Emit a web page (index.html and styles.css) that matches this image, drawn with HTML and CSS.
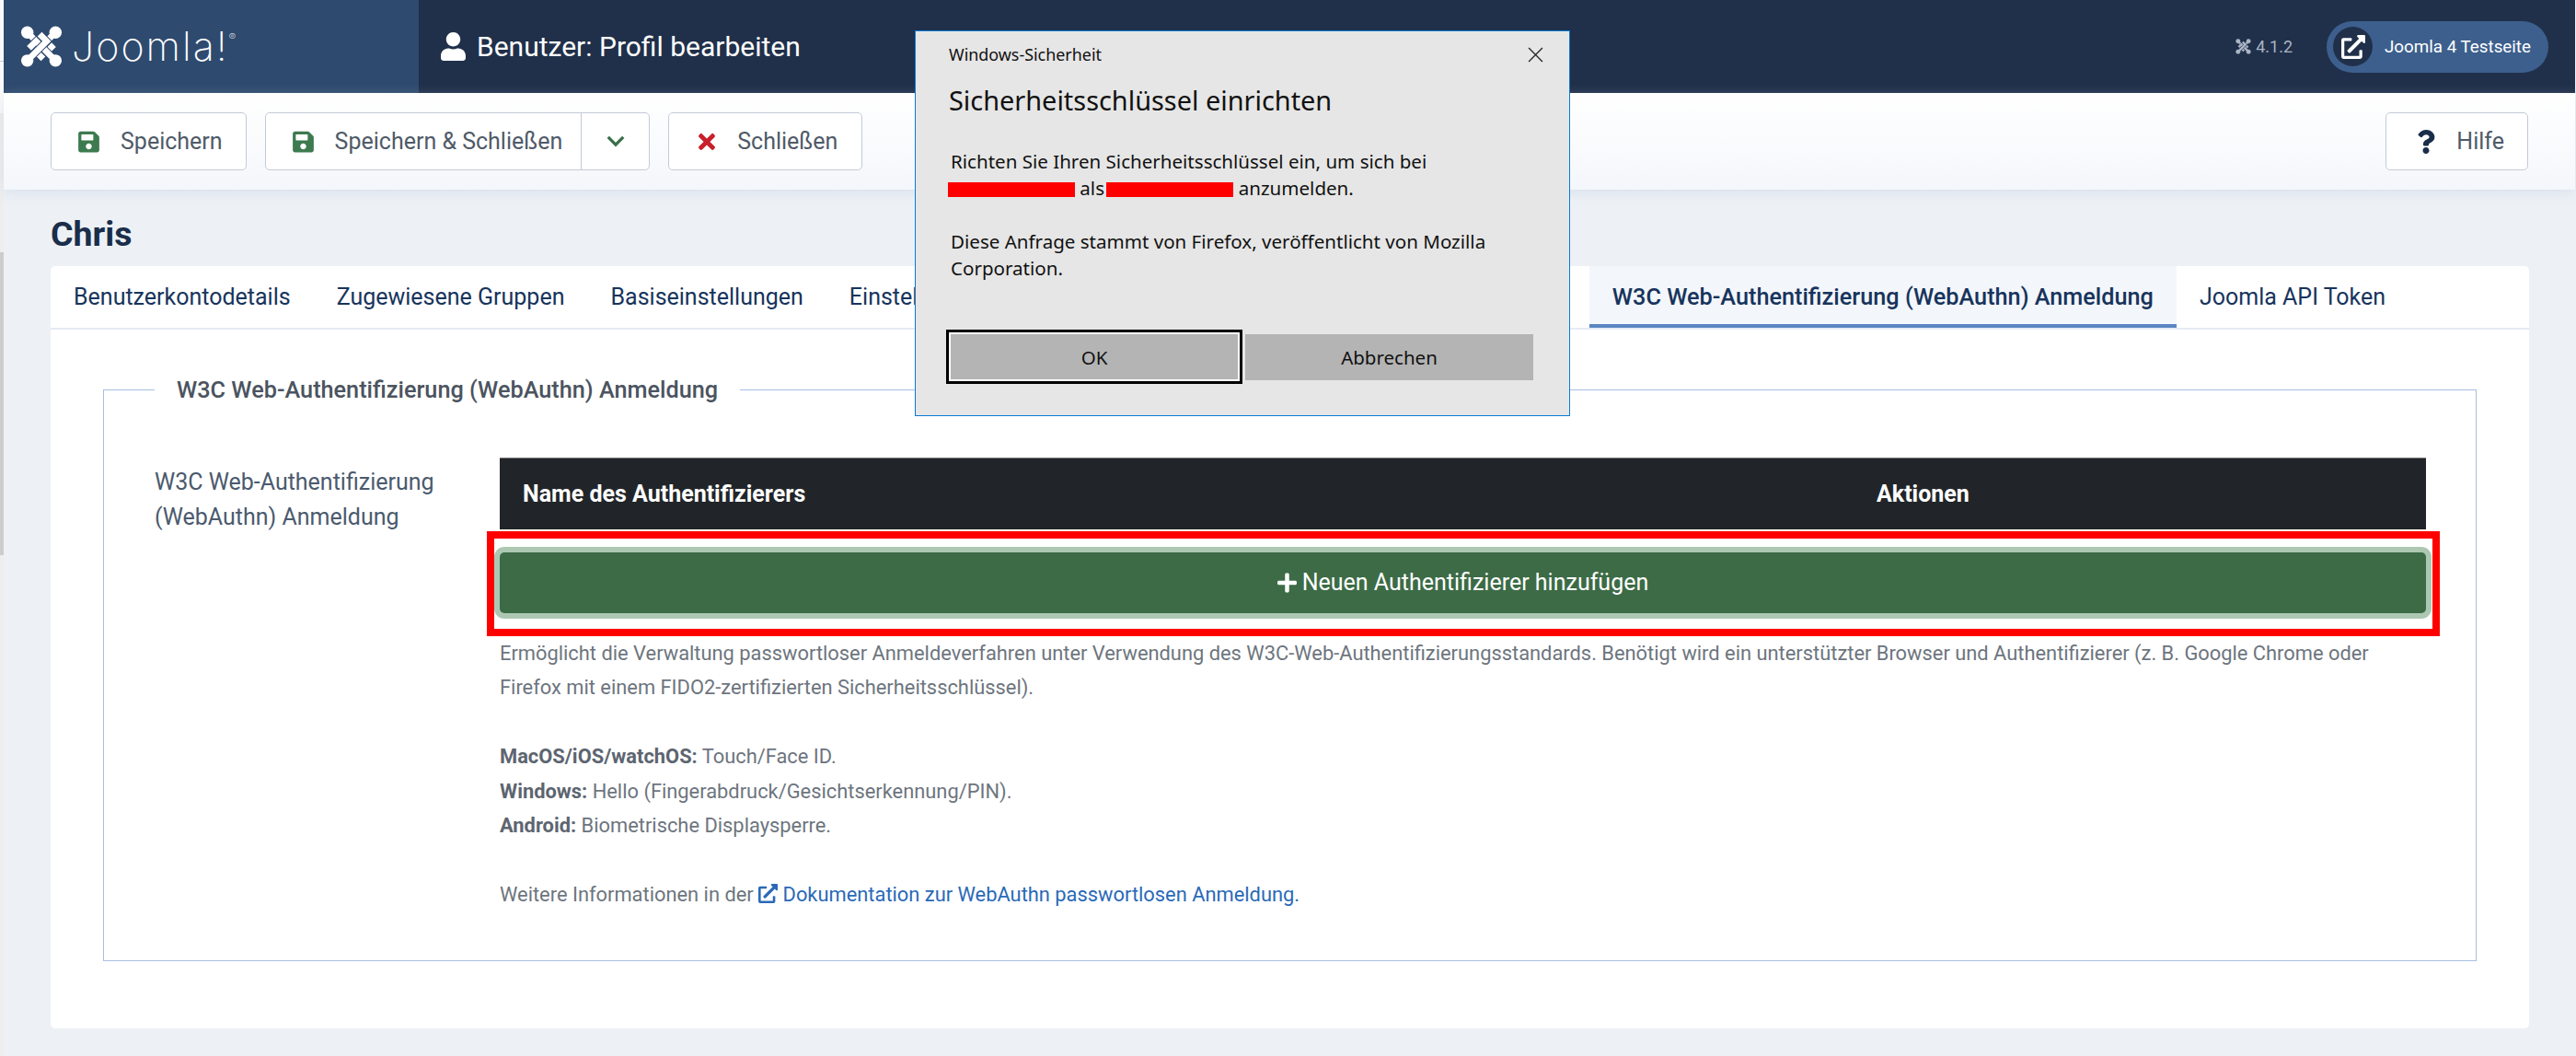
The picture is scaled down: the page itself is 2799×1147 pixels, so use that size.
FILE: index.html
```html
<!DOCTYPE html>
<html lang="de">
<head>
<meta charset="utf-8">
<title>Benutzer: Profil bearbeiten</title>
<link rel="stylesheet" href="styles.css">
</head>
<body>
<svg class="defs" width="0" height="0" aria-hidden="true">
  <defs>
    <g id="joomla-glyph">
      <g id="strand">
        <path class="strand-bg" d="M8 8 L30 30 L38 22"/>
        <path class="strand-fg" d="M8 8 L30 30 L38 22"/>
        <circle class="strand-end" cx="8" cy="8" r="7"/>
      </g>
      <use href="#strand" transform="rotate(90 24 24)"/>
      <use href="#strand" transform="rotate(180 24 24)"/>
      <use href="#strand" transform="rotate(270 24 24)"/>
    </g>
    <symbol id="i-save" viewBox="0 0 448 512"><path d="M433.941 129.941l-83.882-83.882A48 48 0 0 0 316.118 32H48C21.49 32 0 53.49 0 80v352c0 26.51 21.49 48 48 48h352c26.51 0 48-21.49 48-48V163.882a48 48 0 0 0-14.059-33.941zM224 416c-35.346 0-64-28.654-64-64 0-35.346 28.654-64 64-64s64 28.654 64 64c0 35.346-28.654 64-64 64zm96-304.52V212c0 6.627-5.373 12-12 12H76c-6.627 0-12-5.373-12-12V108c0-6.627 5.373-12 12-12h228.52c3.183 0 6.235 1.264 8.485 3.515l3.48 3.48A11.996 11.996 0 0 1 320 111.48z"/></symbol>
    <symbol id="i-ext" viewBox="0 0 512 512"><path d="M432,320H400a16,16,0,0,0-16,16V448H64V128H208a16,16,0,0,0,16-16V80a16,16,0,0,0-16-16H48A48,48,0,0,0,0,112V464a48,48,0,0,0,48,48H400a48,48,0,0,0,48-48V336A16,16,0,0,0,432,320ZM488,0h-128c-21.37,0-32.05,25.91-17,41l35.73,35.73L135,320.37a24,24,0,0,0,0,34L157.67,377a24,24,0,0,0,34,0L435.28,133.32,471,169c15,15,41,4.5,41-17V24A24,24,0,0,0,488,0Z"/></symbol>
  </defs>
</svg>

<div class="app">
  <div class="edge"></div>
  <div class="main">
    <header class="header">
      <div class="brand">
        <svg class="brand-glyph" viewBox="0 0 48 48"><use href="#joomla-glyph"/></svg>
        <span class="brand-name">Joomla!<sup class="brand-reg">®</sup></span>
      </div>
      <div class="page-title">
        <svg class="title-icon" viewBox="0 0 448 512"><path d="M224 256c70.7 0 128-57.3 128-128S294.7 0 224 0 96 57.3 96 128s57.3 128 128 128zm89.6 32h-16.7c-22.2 10.2-46.9 16-72.9 16s-50.6-5.8-72.9-16h-16.7C60.2 288 0 348.2 0 422.4V464c0 26.5 21.5 48 48 48h352c26.5 0 48-21.5 48-48v-41.6c0-74.2-60.2-134.4-134.4-134.4z"/></svg>
        <span>Benutzer: Profil bearbeiten</span>
      </div>
      <div class="header-right">
        <div class="version">
          <svg class="version-glyph" viewBox="0 0 48 48"><use href="#joomla-glyph"/></svg>
          <span>4.1.2</span>
        </div>
        <div class="site-pill">
          <span class="site-circle"><svg class="site-icon"><use href="#i-ext"/></svg></span>
          <span>Joomla 4 Testseite</span>
        </div>
      </div>
    </header>

    <div class="toolbar">
      <div class="btn"><svg class="btn-icon icon-save"><use href="#i-save"/></svg><span>Speichern</span></div>
      <div class="btn btn-split">
        <div class="btn-part"><svg class="btn-icon icon-save"><use href="#i-save"/></svg><span>Speichern &amp; Schließen</span></div>
        <div class="btn-caret"><svg class="caret-icon" viewBox="0 0 24 16"><path d="M3 3 L12 12 L21 3"/></svg></div>
      </div>
      <div class="btn btn-close">
        <svg class="btn-icon icon-close" viewBox="0 0 352 512"><path d="M242.72 256l100.07-100.07c12.28-12.28 12.28-32.19 0-44.48l-22.24-22.24c-12.28-12.28-32.19-12.28-44.48 0L176 189.28 75.93 89.21c-12.28-12.28-32.19-12.28-44.48 0L9.21 111.45c-12.28 12.28-12.28 32.19 0 44.48L109.28 256 9.21 356.07c-12.28 12.28-12.28 32.19 0 44.48l22.24 22.24c12.28 12.28 32.2 12.28 44.48 0L176 322.72l100.07 100.07c12.28 12.28 32.2 12.28 44.48 0l22.24-22.24c12.28-12.28 12.28-32.19 0-44.48L242.72 256z"/></svg>
        <span>Schließen</span>
      </div>
      <div class="btn btn-help">
        <svg class="btn-icon icon-help" viewBox="0 0 384 512"><path d="M202.021 0C122.202 0 70.503 32.703 29.914 91.026c-7.363 10.58-5.093 25.086 5.178 32.874l43.138 32.709c10.373 7.865 25.132 6.026 33.253-4.148 25.049-31.381 43.63-49.449 82.757-49.449 30.764 0 68.816 19.799 68.816 49.631 0 22.552-18.617 34.134-48.993 51.164-35.423 19.86-82.299 44.576-82.299 106.405V320c0 13.255 10.745 24 24 24h72.471c13.255 0 24-10.745 24-24v-5.773c0-42.86 125.268-44.645 125.268-160.627C377.504 66.256 286.902 0 202.021 0zM192 373.459c-38.196 0-69.271 31.075-69.271 69.271 0 38.195 31.075 69.27 69.271 69.27s69.271-31.075 69.271-69.271-31.075-69.27-69.271-69.27z"/></svg>
        <span>Hilfe</span>
      </div>
    </div>

    <main class="content">
      <h1 class="user-name">Chris</h1>
      <section class="card">
        <nav class="tabs">
          <div class="tab">Benutzerkontodetails</div>
          <div class="tab">Zugewiesene Gruppen</div>
          <div class="tab">Basiseinstellungen</div>
          <div class="tab tab-covered">Einstellungen der Barrierefreiheit</div>
          <div class="tab tab-active">W3C Web-Authentifizierung (WebAuthn) Anmeldung</div>
          <div class="tab">Joomla API Token</div>
        </nav>
        <div class="pane">
          <fieldset class="group">
            <legend class="group-title">W3C Web-Authentifizierung (WebAuthn) Anmeldung</legend>
            <div class="form-row">
              <div class="form-label">W3C Web-Authentifizierung<br>(WebAuthn) Anmeldung</div>
              <div class="form-field">
                <table class="auth-table">
                  <thead>
                    <tr><th class="col-name">Name des Authentifizierers</th><th class="col-actions">Aktionen</th></tr>
                  </thead>
                </table>
                <div class="add-wrap">
                  <div class="add-btn">
                    <svg class="add-icon" viewBox="0 0 448 512"><path d="M416 208H272V64c0-17.67-14.33-32-32-32h-32c-17.67 0-32 14.33-32 32v144H32c-17.67 0-32 14.33-32 32v32c0 17.67 14.33 32 32 32h144v144c0 17.67 14.33 32 32 32h32c17.67 0 32-14.33 32-32V304h144c17.67 0 32-14.33 32-32v-32c0-17.67-14.33-32-32-32z"/></svg>
                    <span>Neuen Authentifizierer hinzufügen</span>
                  </div>
                  <div class="highlight"></div>
                </div>
                <p class="desc">Ermöglicht die Verwaltung passwortloser Anmeldeverfahren unter Verwendung des W3C-Web-Authentifizierungsstandards. Benötigt wird ein unterstützter Browser und Authentifizierer (z. B. Google Chrome oder<br>Firefox mit einem FIDO2-zertifizierten Sicherheitsschlüssel).<br><br><b>MacOS/iOS/watchOS:</b> Touch/Face ID.<br><b>Windows:</b> Hello (Fingerabdruck/Gesichtserkennung/PIN).<br><b>Android:</b> Biometrische Displaysperre.<br><br>Weitere Informationen in der <a class="doc-link"><svg class="link-icon"><use href="#i-ext"/></svg> Dokumentation zur WebAuthn passwortlosen Anmeldung.</a></p>
              </div>
            </div>
          </fieldset>
        </div>
      </section>
    </main>
  </div>
</div>

<div class="dialog">
  <div class="dialog-top">
    <span class="dialog-app">Windows-Sicherheit</span>
    <svg class="dialog-x" viewBox="0 0 16 16"><path d="M1 1 L15 15 M15 1 L1 15"/></svg>
  </div>
  <div class="dialog-heading">Sicherheitsschlüssel einrichten</div>
  <div class="dialog-body">
    <p class="dialog-p">Richten Sie Ihren Sicherheitsschlüssel ein, um sich bei<br><span class="redact"></span> als <span class="redact"></span> anzumelden.</p>
    <p class="dialog-p">Diese Anfrage stammt von Firefox, veröffentlicht von Mozilla<br>Corporation.</p>
  </div>
  <div class="dialog-buttons">
    <div class="dlg-btn dlg-ok">OK</div>
    <div class="dlg-btn dlg-cancel">Abbrechen</div>
  </div>
</div>
</body>
</html>
```

FILE: styles.css
```css
* { box-sizing: border-box; }
html, body { margin: 0; padding: 0; }
body {
  width: 2799px;
  height: 1147px;
  overflow: hidden;
  position: relative;
  font-family: Roboto, "Liberation Sans", sans-serif;
  background: #edf1f6;
}
.defs { position: absolute; }

.app { display: flex; height: 1147px; }
.edge {
  width: 4px;
  flex: none;
  background: linear-gradient(#fafafa 0, #fafafa 66px, #ccc 66px, #ccc 67px, #fafafa 67px, #fafafa 123px, #eee 123px, #eee 274px, #ccc 274px, #ccc 603px, #eee 603px);
}
.main { flex: 1; min-width: 0; display: flex; flex-direction: column; }

/* header */
.header {
  height: 101px;
  flex: none;
  display: flex;
  align-items: center;
  background: #20304a;
  color: #fff;
  margin-right: 1px;
}
.brand {
  --bg: #2e4a6e;
  width: 451px;
  height: 100%;
  flex: none;
  background: #2e4a6e;
  display: flex;
  align-items: center;
  padding-left: 18px;
  gap: 10px;
}
.brand-glyph { width: 46px; height: 47px; margin-top: -1px; }
.brand-name {
  font-family: Inter, sans-serif;
  font-weight: 200;
  font-size: 43px;
  color: #fff;
  line-height: 1;
  letter-spacing: 2px;
  position: relative;
  top: 0;
}
.brand-reg { font-size: 11px; vertical-align: 22px; line-height: 0; }
.strand-bg { fill: none; stroke: var(--bg); stroke-width: 9; }
.strand-fg { fill: none; stroke: currentColor; stroke-width: 7; }
.strand-end { fill: currentColor; }
.page-title {
  display: flex;
  align-items: center;
  gap: 12px;
  padding-left: 24px;
  font-size: 30px;
  font-weight: 400;
}
.title-icon { width: 27px; height: 31px; fill: #fff; }
.header-right { margin-left: auto; display: flex; align-items: center; padding-right: 29px; }
.version {
  --bg: #20304a;
  display: flex;
  align-items: center;
  gap: 5px;
  font-size: 18px;
  color: #aab4c4;
  margin-right: 37px;
}
.version-glyph { width: 17px; height: 17px; color: #aab4c4; }
.site-pill {
  width: 241px;
  height: 56px;
  border-radius: 28px;
  background: #3d5f8d;
  display: flex;
  align-items: center;
  padding-left: 7px;
  gap: 13px;
  font-size: 18.8px;
  color: #fff;
}
.site-circle {
  width: 43px;
  height: 43px;
  border-radius: 50%;
  background: #20304a;
  display: flex;
  align-items: center;
  justify-content: center;
}
.site-icon { width: 26px; height: 26px; fill: #fff; }

/* toolbar */
.toolbar {
  height: 105px;
  flex: none;
  position: relative;
  display: flex;
  align-items: flex-start;
  padding: 21px 51px 0 51px;
  gap: 20px;
  background: linear-gradient(#fff, #f4f7fb);
  box-shadow: 0 3px 12px rgba(180, 195, 215, .35);
  margin-right: 1px;
}
.btn {
  height: 63px;
  background: #fff;
  border: 1.5px solid #c3cbd8;
  border-radius: 5px;
  display: flex;
  align-items: center;
  padding: 0 25px 0 29px;
  gap: 23px;
  font-size: 25px;
  color: #4f5a68;
}
.btn-split { padding: 0; gap: 0; }
.btn-part { display: flex; align-items: center; gap: 23px; padding: 0 20px 0 29px; height: 100%; border-right: 1.5px solid #c3cbd8; }
.btn-caret { width: 73px; display: flex; justify-content: center; align-items: center; }
.caret-icon { width: 22px; height: 15px; fill: none; stroke: #38704a; stroke-width: 3.5; }
.btn-icon { width: 23px; height: 26px; flex: none; }
.icon-save { fill: #3e7a4f; }
.icon-close { fill: #c8202b; width: 20px; }
.icon-help { fill: #1a2e4a; width: 20px; height: 26px; }
.btn-close { padding-left: 31px; padding-right: 26px; }
.btn-help { margin-left: auto; padding: 0 25px 0 33px; gap: 23px; }

/* content */
.content { flex: 1; padding: 0 51px 30px; display: flex; flex-direction: column; }
.user-name {
  margin: 0;
  height: 83px;
  padding-top: 28px;
  font-size: 37.5px;
  line-height: 40px;
  font-weight: 700;
  color: #1a2e4a;
}
.card { flex: 1; background: #fff; border-radius: 5px; display: flex; flex-direction: column; }
.tabs { display: flex; height: 69px; flex: none; border-bottom: 2px solid #e6ebf5; }
.tab {
  height: 67px;
  padding: 0 25px;
  display: flex;
  align-items: center;
  flex: none;
  font-size: 25px;
  color: #17345c;
  white-space: nowrap;
}
.tab-covered { width: 829px; overflow: hidden; }
.tab-active {
  background: #f3f6fa;
  border-bottom: 4px solid #5b86c4;
  font-size: 25.25px;
  font-weight: 500;
  padding-top: 4px;
}
.pane { flex: 1; padding: 47px 57px 73px; }
.group {
  margin: 0;
  padding: 0 54px 53px 55px;
  border: 1.5px solid #a8bfe2;
  height: 639px;
  min-width: 0;
}
.group-title {
  padding: 0 24px;
  font-size: 25.25px;
  font-weight: 500;
  color: #4b5460;
  line-height: 37px;
}
.form-row { display: grid; grid-template-columns: 375px 1fr; padding-top: 55px; }
.form-label { font-size: 25px; line-height: 37.5px; color: #4b5a6e; padding-top: 8px; }
.form-field { min-width: 0; }
.auth-table { width: 100%; border-collapse: collapse; table-layout: fixed; }
.auth-table th {
  height: 77px;
  background: #212529;
  color: #fff;
  font-size: 25px;
  font-weight: 700;
  text-align: left;
  padding: 0 0 0 25px;
  border-top: 1px solid #777;
}
.col-actions { width: 622px; }
.add-wrap { position: relative; margin-top: 25px; }
.add-btn {
  height: 66px;
  background: #3c6b46;
  border-radius: 5px;
  box-shadow: 0 0 0 6px #adc8b2;
  color: #fff;
  font-size: 25px;
  font-weight: 400;
  display: flex;
  align-items: center;
  justify-content: center;
  gap: 6px;
}
.add-icon { width: 21px; height: 24px; fill: #fff; }
.highlight {
  position: absolute;
  left: -14px;
  right: -15px;
  top: -23px;
  bottom: -25px;
  border: 8px solid #f00;
}
.desc {
  margin: 25px 0 0;
  font-size: 21.875px;
  line-height: 37.5px;
  color: #6d757e;
  white-space: nowrap;
}
.desc b { font-weight: 700; color: #5d6570; }
.doc-link { color: #2a69b8; }
.link-icon { width: 21px; height: 21px; fill: #2a69b8; vertical-align: -2px; }

/* windows dialog */
.dialog {
  position: absolute;
  left: 994px;
  top: 33px;
  width: 712px;
  height: 419px;
  background: #e6e6e6;
  border: 1.5px solid #0a7ad8;
  padding: 0 35px 0 36px;
  font-family: "Noto Sans", sans-serif;
  color: #111;
}
.dialog-top { display: flex; align-items: center; justify-content: space-between; height: 50px; }
.dialog-app { font-size: 17.9px; }
.dialog-x { width: 17px; height: 17px; fill: none; stroke: #222; stroke-width: 1.2; margin-right: -7px; }
.dialog-heading { font-size: 28.9px; line-height: 44px; margin-top: 3px; }
.dialog-body { padding-top: 30px; font-size: 20.55px; line-height: 29px; margin-left: 2px; }
.dialog-p { margin: 0 0 29px; white-space: nowrap; }
.redact { display: inline-block; width: 138px; height: 16px; background: #f00; margin-left: -3px; vertical-align: -2px; }
.dialog-buttons { display: flex; align-items: center; gap: 3px; position: absolute; left: 33px; top: 324px; }
.dlg-btn { height: 50px; display: flex; align-items: center; justify-content: center; background: #b4b4b4; font-size: 20.5px; }
.dlg-ok { width: 322px; height: 59px; box-shadow: inset 0 0 0 3px #000, inset 0 0 0 5px #fff; }
.dlg-cancel { width: 313px; }
```
